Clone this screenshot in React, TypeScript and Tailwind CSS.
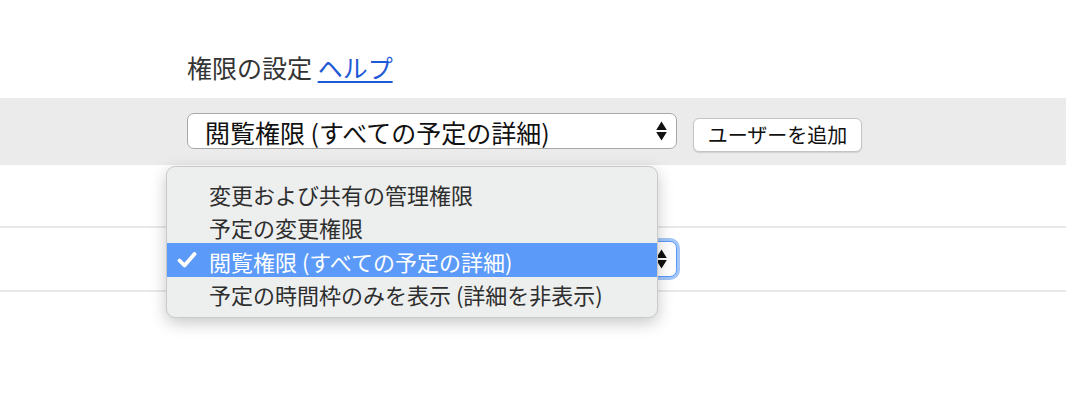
import React from "react";

const jp = { fontFamily: '"Noto Sans CJK JP", "Noto Sans", sans-serif' };

function Arrows() {
  return (
    <svg width="11" height="20" viewBox="0 0 11 20" className="shrink-0">
      <path d="M5.5 0.5 L10.8 9 L0.2 9 Z" fill="#111" />
      <path d="M5.5 19.5 L10.8 11 L0.2 11 Z" fill="#111" />
    </svg>
  );
}

function FakeSelect({ label, focused }: { label: string; focused?: boolean }) {
  return (
    <div
      className={
        "flex items-center justify-between w-[490px] h-[36px] pl-[17px] pr-[9px] bg-white rounded-[7px] " +
        (focused
          ? "border border-[#5b9af8] ring-[3px] ring-[#a3c6f8]"
          : "border-[1.5px] border-[#a8a8a8]")
      }
    >
      <span className="text-[25px] leading-none text-[#111] pt-[3px]">{label}</span>
      <Arrows />
    </div>
  );
}

const options = [
  "変更および共有の管理権限",
  "予定の変更権限",
  "閲覧権限 (すべての予定の詳細)",
  "予定の時間枠のみを表示 (詳細を非表示)",
];

export default function App() {
  const selected = 2;

  return (
    <main className="relative w-[1066px] h-[412px] bg-white overflow-hidden" style={jp}>
      {/* Header */}
      <div className="pt-[51px] pl-[187px] h-[98px]">
        <h1 className="text-[25px] leading-[32px] text-[#333]">
          権限の設定{" "}
          <a href="#" className="text-[#1f5ad6] underline underline-offset-[3px]">
            ヘルプ
          </a>
        </h1>
      </div>

      {/* Gray band */}
      <div className="h-[67px] bg-[#ebebeb] pl-[187px] pt-[15px] flex items-start gap-4">
        <FakeSelect label="閲覧権限 (すべての予定の詳細)" />
        <button className="mt-[5px] h-[34px] w-[169px] bg-white border border-[#c4c4c4] rounded-[6px] shadow-[0_1px_1px_rgba(0,0,0,0.12)] text-[20px] leading-none text-[#111]">
          ユーザーを追加
        </button>
      </div>

      {/* Rows */}
      <div className="h-[61px]" />
      <div className="h-[2px] bg-[#e8e8e8]" />
      <div className="h-[62px] pl-[187px] flex items-center">
        <FakeSelect label="閲覧権限 (すべての予定の詳細)" focused />
      </div>
      <div className="h-[2px] bg-[#e8e8e8]" />

      {/* Open dropdown */}
      <div className="absolute left-[166px] top-[166px] w-[492px] h-[152px] pt-[9px] bg-[#edefef] border border-[#c9c9c9] rounded-[9px] shadow-[0_5px_16px_rgba(0,0,0,0.22)]">
        {options.map((opt, i) => (
          <div
            key={opt}
            className={
              "relative h-[33.5px] flex items-center pl-[42px] text-[22px] leading-none " +
              (i === selected ? "bg-[#5b9af8] text-white" : "text-[#2e2e2e]")
            }
          >
            {i === selected && (
              <svg
                width="20"
                height="16"
                viewBox="0 0 20 16"
                className="absolute left-[10px] top-[9px]"
              >
                <path
                  d="M2.5 8.5 L7.5 13.5 L17.5 2"
                  fill="none"
                  stroke="white"
                  strokeWidth="3.8"
                  strokeLinecap="round"
                  strokeLinejoin="round"
                />
              </svg>
            )}
            <span className="pt-[2px]">{opt}</span>
          </div>
        ))}
      </div>
    </main>
  );
}
